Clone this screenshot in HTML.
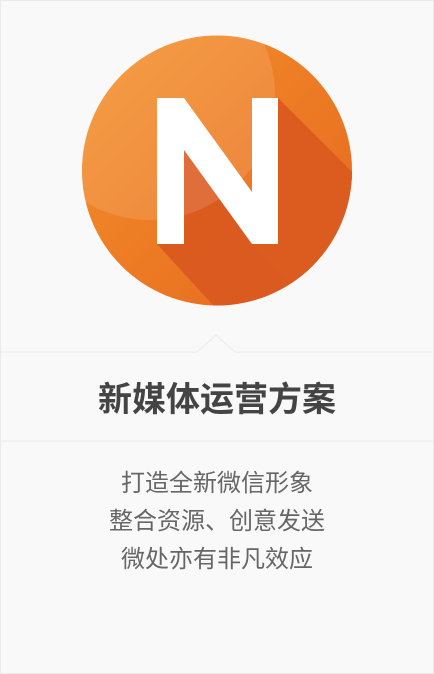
<!DOCTYPE html>
<html><head><meta charset="utf-8"><style>
html,body{margin:0;padding:0;}
body{width:434px;height:674px;background:#f9f9f9;position:relative;overflow:hidden;font-family:"Liberation Sans","Noto Sans CJK SC",sans-serif;}
.card{position:absolute;left:0;top:0;width:432px;height:672px;border:1px solid #ebebeb;background:#f9f9f9;}
.t{position:absolute;left:0;width:434px;text-align:center;}
</style></head><body>
<div class="card"></div>
<svg style="position:absolute;left:0;top:0" width="434" height="674">
<defs>
<clipPath id="c"><circle cx="217" cy="170.5" r="135"/></clipPath>
<linearGradient id="g" x1="0" y1="0" x2="1" y2="1">
<stop offset="0" stop-color="#f5922a"/><stop offset="1" stop-color="#e5661f"/></linearGradient>
</defs>
<circle cx="217" cy="170.5" r="135" fill="url(#g)"/>
<g clip-path="url(#c)">
<polygon points="157,244 184,244 184,150 252,244 278,98 400,220 400,400 300,400" fill="#d9581f" opacity="0.9"/>
<polygon points="278,98 278,244 252,244 400,392 400,220" fill="#dc5c20"/>
<circle cx="150" cy="95" r="125" fill="#ffffff" opacity="0.12"/>
</g>
<polygon points="157,98 184,98 252,192 252,98 278,98 278,244 252,244 184,150 184,244 157,244" fill="#fff"/>
<polyline points="1,352 197,352 216,335 235,352 433,352" fill="none" stroke="#ebebeb" stroke-width="1"/>
<line x1="1" y1="441" x2="433" y2="441" stroke="#ebebeb"/>
</svg>
<div class="t" style="top:379px;font-size:34px;font-weight:bold;color:#444;line-height:42px;">新媒体运营方案</div>
<div class="t" style="top:465px;font-size:24px;color:#666;line-height:38px;">打造全新微信形象<br>整合资源、创意发送<br>微处亦有非凡效应</div>
</body></html>
